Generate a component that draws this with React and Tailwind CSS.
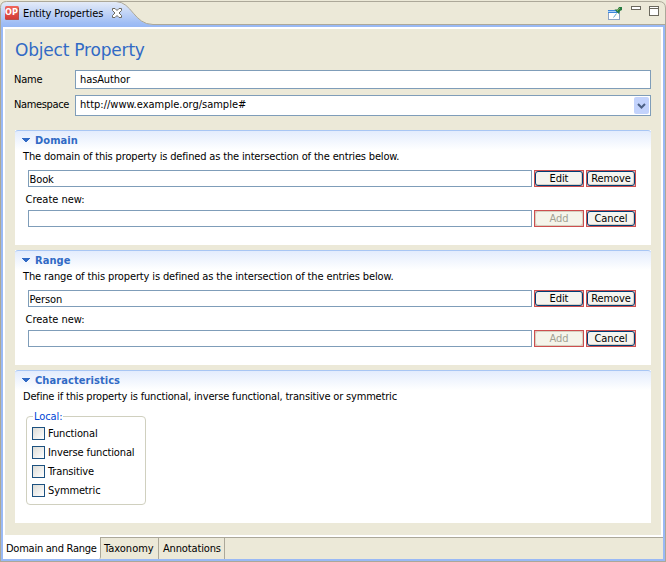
import React from "react";

function Field({ value = "", className = "" }) {
  return (
    <div className={"h-[17px] border border-[#7f9db9] bg-white whitespace-nowrap " + className}>
      {value}
    </div>
  );
}

function PushButton({ label, disabled = false }) {
  return (
    <div className="h-[17px] w-[50px] border border-[#cc4f4f] bg-[#e3b5b5]">
      <div
        className={
          "flex h-[15px] w-[48px] items-center justify-center rounded-[3px] border whitespace-nowrap " +
          (disabled
            ? "border-[#d5d0bf] bg-[#f5f4ea] text-[#a1a192]"
            : "border-[#003c74] bg-[#f5f4ef] text-black shadow-[inset_-1px_-1px_0_#d6d0c5]")
        }
      >
        <span className="pt-px tracking-[-0.1px]">{label}</span>
      </div>
    </div>
  );
}

function SectionHeader({ title }) {
  return (
    <div className="flex h-[20px] rounded-t-[3px] border-t border-t-[#a8c6f4] bg-linear-to-b from-[#e3ecfd] to-white pt-[2px] pl-[7px]">
      <svg width="8" height="5" className="mt-[5px]" shapeRendering="crispEdges">
        <path d="M0 0h8v1H0zM1 1h6v1H1zM2 2h4v1H2zM3 3h2v1H3z" fill="#316ac5" />
      </svg>
      <span className="mt-px ml-[5px] text-[11px] leading-[14px] font-bold tracking-[0.08px] text-[#316ac5]">{title}</span>
    </div>
  );
}

function EntrySection({ title, text, value, tracking }) {
  return (
    <section className="h-[115px] bg-white">
      <SectionHeader title={title} />
      <p className={"h-[20px] pl-[8px] leading-[13px] whitespace-nowrap " + tracking}>{text}</p>
      <div className="flex gap-[2px] pl-[13px]">
        <Field value={value} className="w-[504px] pl-[0.5px] leading-[17px] tracking-[-0.1px]" />
        <PushButton label="Edit" />
        <PushButton label="Remove" />
      </div>
      <p className="h-[23px] pt-[5px] pl-[10.5px] leading-[15px]">Create new:</p>
      <div className="flex gap-[2px] pl-[13px]">
        <Field className="w-[504px]" />
        <PushButton label="Add" disabled />
        <PushButton label="Cancel" />
      </div>
    </section>
  );
}

function CheckRow({ label }) {
  return (
    <div className="flex h-[19px] gap-[3px]">
      <div className="size-[13px] border border-[#1c5180] bg-linear-to-br from-[#dcdcd7] to-white" />
      <span className="leading-[14px] tracking-[-0.13px] whitespace-nowrap">{label}</span>
    </div>
  );
}

function TitleBar() {
  return (
    <header className="relative h-[29px] w-[666px]">
      <svg width="666" height="29" className="absolute inset-0">
        <defs>
          <linearGradient id="tab" x1="0" y1="0" x2="0" y2="1">
            <stop offset="0" stopColor="#e4ebf8" />
            <stop offset="0.85" stopColor="#a2bff5" />
            <stop offset="1" stopColor="#99b9f5" />
          </linearGradient>
          <linearGradient id="badge" x1="0" y1="0" x2="0" y2="1">
            <stop offset="0" stopColor="#f0655c" />
            <stop offset="1" stopColor="#d23a34" />
          </linearGradient>
        </defs>
        <path d="M0 29V7Q0 1 6 1H659Q666 1 666 8V29Z" fill="#ece9d8" />
        <path d="M1 29V25H665V29Z" fill="#99b9f5" />
        <path d="M1 26V8Q1 2 7 2H117C132 2 134 24.500 153 24.500V26Z" fill="url(#tab)" />
        <path d="M.5 29V7.500Q.5 1.500 6.500 1.500H658.500Q665.500 1.500 665.500 8V29" fill="none" stroke="#aca899" />
        <path d="M116 1.500C132 2 134 24.500 153 24.500H665" fill="none" stroke="#aca899" />
        <path d="M3 27H663V29H3Z" fill="#fff" />
        <rect x="5" y="6" width="14" height="14" rx="1.500" fill="url(#badge)" />
        <path d="M6 19.500H18.500V8" fill="none" stroke="#b5504c" />
        <path d="M112.500 8.500h2.500l2 2 2-2h2.500v2l-2.500 2.500 2.500 2.500v2h-2.500l-2-2-2 2h-2.500v-2l2.500-2.500-2.500-2.500z" fill="#fff" stroke="#6c6a60" />
        <rect x="608.500" y="10.500" width="11" height="9" fill="#fff" stroke="#8ca3c4" />
        <path d="M608 10h10v3h-10z" fill="#3c86dc" />
        <path d="M608 11.500h8" stroke="#a9cff5" />
        <path d="M613.500 17.500l3-4" stroke="#62a7cc" />
        <path d="M614.500 9.500l4.500 4.500 1-3 2-1V7h-3l-1.500 2.500z" fill="#277b42" />
        <path d="M617 11l3-3" stroke="#7fae4c" />
        <rect x="631.500" y="6.500" width="9" height="3" fill="#fff" stroke="#6b695e" />
        <rect x="649.500" y="6.500" width="9" height="9" fill="#fff" stroke="#6b695e" />
        <path d="M649 8.500h10" stroke="#6b695e" />
      </svg>
      <div className="relative flex pt-[6px] pl-[5px] leading-[15px]">
        <span className="w-[18px] text-[9px] leading-[13px] font-bold text-white">OP</span>
        <span className="tracking-[-0.1px]">Entity Properties</span>
      </div>
    </header>
  );
}

export default function App() {
  return (
    <div className="h-[562px] w-[666px] overflow-hidden bg-[#ece9d8] font-['DejaVu_Sans_Condensed','DejaVu_Sans',sans-serif] text-[11px] text-black">
      <TitleBar />
      <div className="h-[533px] border-x border-b border-[#aca899]">
        <div className="h-[532px] border-x-2 border-b-2 border-[#99b9f5]">
          <main className="h-[508px] border-x-2 border-b-2 border-white px-[10px] pt-[10px]">
            <h1 className="h-[31px] font-['DejaVu_Sans',sans-serif] text-[17px] leading-[22px] tracking-[-0.2px] text-[#316ac5]">
              Object Property
            </h1>
            <div className="-ml-px flex h-[25px]">
              <span className="w-[61px] leading-[20px] tracking-[-0.2px]">Name</span>
              <Field value="hasAuthor" className="h-[19px] w-[576px] pl-[4px] leading-[18px] tracking-[-0.1px]" />
            </div>
            <div className="-ml-px flex h-[35px]">
              <span className="w-[61px] leading-[20px] tracking-[-0.35px]">Namespace</span>
              <div className="flex h-[21px] w-[576px] justify-between border border-[#7f9db9] bg-white pl-[4px] leading-[18px]">
                <span>http://www.example.org/sample#</span>
                <div className="m-px flex h-[17px] w-[15px] items-center justify-center rounded-[2px] bg-[#c3d3fc]">
                  <svg width="9" height="6">
                    <path d="M1 1l3.500 3.500L8 1" fill="none" stroke="#4d6185" strokeWidth="2" />
                  </svg>
                </div>
              </div>
            </div>
            <div className="flex w-[636px] flex-col gap-[5px]">
              <EntrySection
                title="Domain"
                value="Book"
                tracking="tracking-[-0.16px]"
                text="The domain of this property is defined as the intersection of the entries below."
              />
              <EntrySection
                title="Range"
                value="Person"
                tracking="tracking-[-0.13px]"
                text="The range of this property is defined as the intersection of the entries below."
              />
              <section className="h-[153px] bg-white">
                <SectionHeader title="Characteristics" />
                <p className="h-[26px] pl-[8px] leading-[13px] tracking-[-0.18px] whitespace-nowrap">
                  Define if this property is functional, inverse functional, transitive or symmetric
                </p>
                <div className="relative ml-[11px] h-[89px] w-[120px] rounded-[4px] border border-[#d0d0bf] pt-[10px] pl-[5px]">
                  <span className="absolute -top-[7px] left-[6px] bg-white px-px leading-[14px] tracking-[-0.1px] text-[#0046d5]">Local:</span>
                  <CheckRow label="Functional" />
                  <CheckRow label="Inverse functional" />
                  <CheckRow label="Transitive" />
                  <CheckRow label="Symmetric" />
                </div>
              </section>
            </div>
          </main>
          <nav className="flex h-[22px] border-t border-[#aca899] leading-[21px] whitespace-nowrap">
            <span className="-mt-px w-[98px] rounded-br-[2px] border-r border-[#aca899] bg-white pt-px pl-[3px] tracking-[-0.25px]">
              Domain and Range
            </span>
            <span className="w-[58px] border-r border-[#aca899] pl-[3px]">Taxonomy</span>
            <span className="w-[66px] border-r border-[#aca899] pl-[4px] tracking-[-0.15px]">Annotations</span>
          </nav>
        </div>
      </div>
    </div>
  );
}
